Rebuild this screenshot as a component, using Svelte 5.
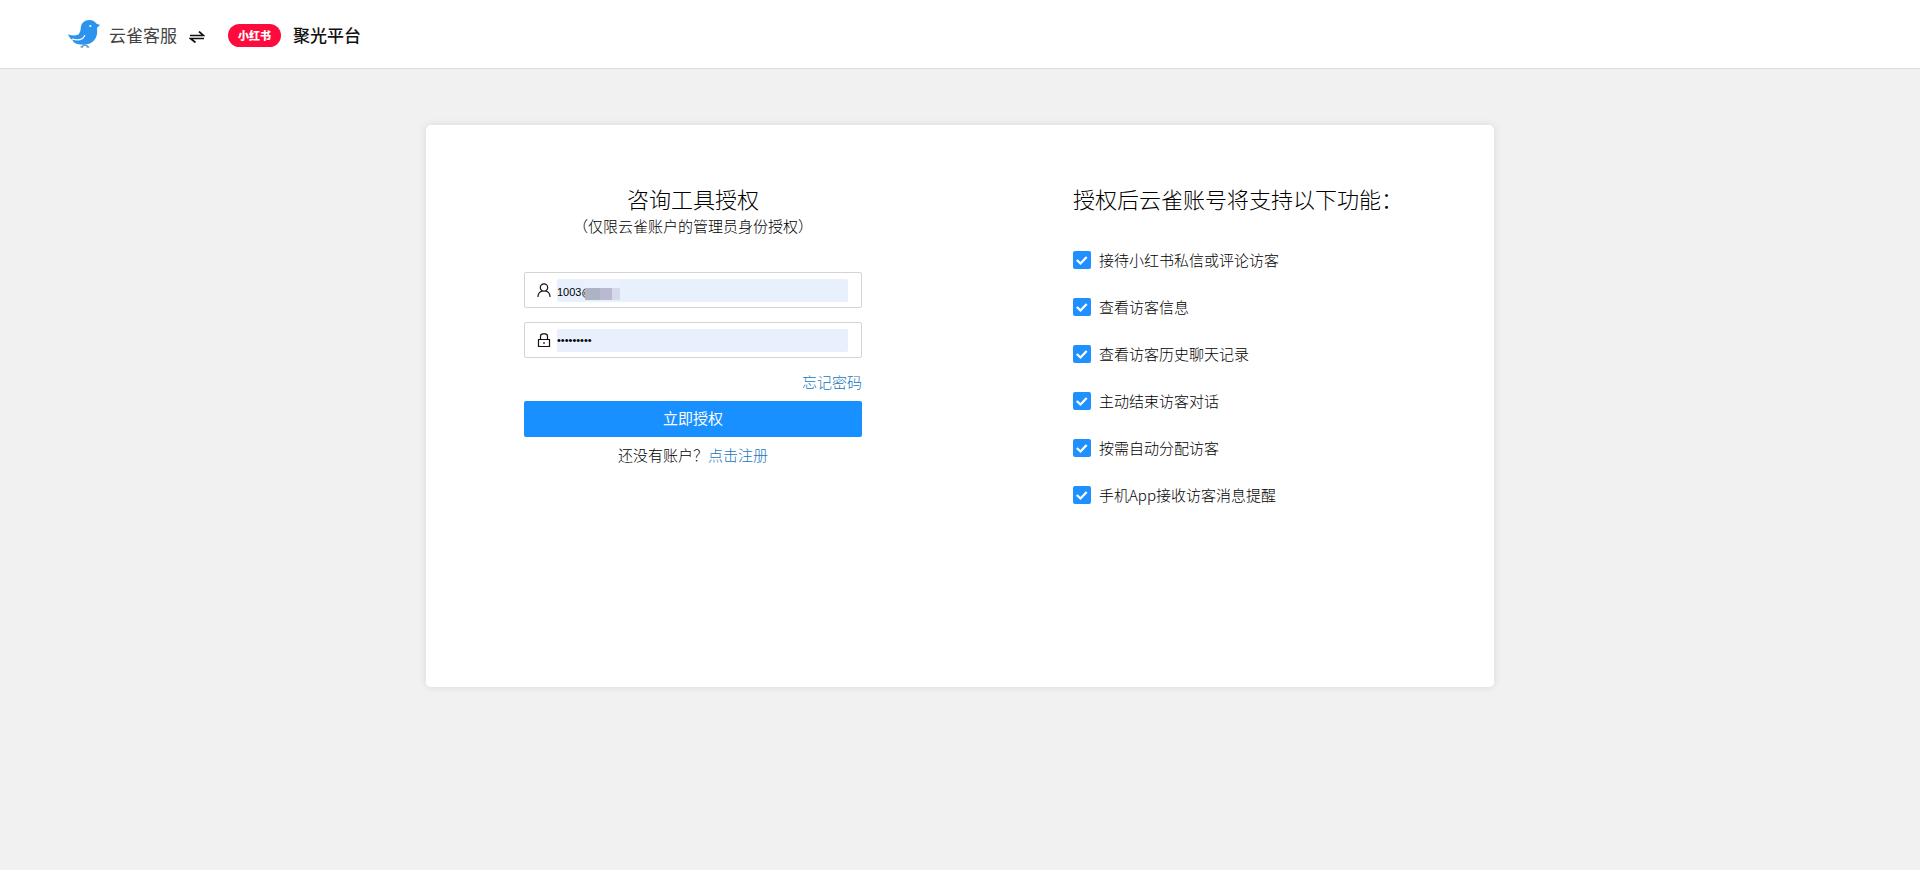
<script>
	let account = $state("1003@");
	let password = $state("123456789");

	let features = $state([
		{ name: "接待小红书私信或评论访客", checked: true },
		{ name: "查看访客信息", checked: true },
		{ name: "查看访客历史聊天记录", checked: true },
		{ name: "主动结束访客对话", checked: true },
		{ name: "按需自动分配访客", checked: true },
		{ name: "手机App接收访客消息提醒", checked: true },
	]);
</script>

<div class="page">
	<header>
		<svg class="bird" viewBox="0 0 32 28" aria-hidden="true">
			<path
				fill="#2b93ee"
				d="M32 5 28.600 3.800C27 1.300 24.500 0 21.500 0c-5 0-8.500 3.500-8.700 7.500-.1 3-.8 5.200-2.300 7C7 16.200 3.500 15.800.2 14.200c.6 2.600 2 4.300 4 5.600l1.600 2.400c3.500 2.300 8 2.800 12.200 2.300 6.500-.8 11-5.500 11.200-12.500 0-1.700-.2-3-.2-4.200.8-.8 2-1.500 3-2.800z"
			/>
			<path
				d="M4.500 19.200c5 1.200 10.500.6 12.200-3.700"
				fill="none"
				stroke="#fff"
				stroke-width="1.200"
				stroke-linecap="round"
			/>
			<circle cx="22.300" cy="6" r="1.100" fill="#fff" />
			<path
				d="M12.500 27.300c1-.8 1.800-.6 2.700-.2M13.500 26.800c1.500-2 5.500-2 7 0M18.500 27.100c1-.4 1.800-.6 2.800.2"
				fill="none"
				stroke="#5b93c4"
				stroke-width="1.200"
			/>
		</svg>
		<span class="brand">云雀客服</span>
		<svg class="swap" viewBox="0 0 16 12" aria-hidden="true">
			<path d="M1 4.500h13.500L10 .5M15 7.500H1.500l5 4" fill="none" stroke="#111" stroke-width="1.700" />
		</svg>
		<span class="pill">小红书</span>
		<span class="platform">聚光平台</span>
	</header>

	<main>
		<section class="login">
			<h1>咨询工具授权</h1>
			<p class="hint">（仅限云雀账户的管理员身份授权）</p>

			<form onsubmit={(e) => e.preventDefault()}>
				<div class="field">
					<label for="account" aria-label="账户">
						<svg viewBox="0 0 14 14">
							<circle cx="7" cy="4.500" r="3.700" />
							<path d="M1 14c0-3.500 2-5.500 4.500-6M13 14c0-3.500-2-5.500-4.500-6" />
						</svg>
					</label>
					<div class="control">
						<input id="account" type="text" bind:value={account} />
						<span class="mask"><i></i><i></i><i></i></span>
					</div>
				</div>
				<div class="field">
					<label for="password" aria-label="密码">
						<svg viewBox="0 0 14 14">
							<path d="M1.500 6.500h11v7h-11zM3.500 6.500V3.500Q3.500.8 6 .8h2q2.500 0 2.500 2.700v3M7 9v2" />
						</svg>
					</label>
					<div class="control">
						<input id="password" type="password" bind:value={password} />
					</div>
				</div>
				<a class="forgot" href="#forgot">忘记密码</a>
				<button type="submit">立即授权</button>
			</form>
			<p class="register">还没有账户？<a href="#register">点击注册</a></p>
		</section>

		<section class="features">
			<h2>授权后云雀账号将支持以下功能：</h2>
			<ul>
				{#each features as item}
					<li>
						<label>
							<input type="checkbox" bind:checked={item.checked} />
							<svg class="tick" viewBox="0 0 18 18" aria-hidden="true">
								<path d="M3.800 9l3.700 3.500 6.200-6.500" />
							</svg>
							<span>{item.name}</span>
						</label>
					</li>
				{/each}
			</ul>
		</section>
	</main>
</div>

<style>
	:global(body) {
		margin: 0;
		background: #f1f1f1;
	}

	.page {
		min-height: 100vh;
		font-family: "Noto Sans CJK SC", sans-serif;
		font-size: 15px;
		font-weight: 300;
		line-height: 22px;
		color: #000;
	}

	header {
		display: flex;
		align-items: center;
		height: 68px;
		padding: 0 68px;
		background: #fff;
		border-bottom: 1px solid #dcdcdc;
	}

	.bird {
		width: 32px;
		height: 28px;
	}

	.brand,
	.platform {
		margin-top: 2px;
		font-size: 17px;
		font-weight: 400;
		line-height: 24px;
		color: #444;
	}

	.brand {
		margin-right: 12px;
		margin-left: 9px;
	}

	.swap {
		width: 16px;
		height: 12px;
		margin: 6px 23px 0 0;
	}

	.pill {
		margin: 2px 12px 0 0;
		padding: 0 10px;
		border-radius: 12px;
		background: #ff0a3c;
		color: #fff;
		font-size: 11px;
		font-weight: 900;
		line-height: 23px;
	}

	.platform {
		color: #111;
		font-weight: 500;
	}

	main {
		display: grid;
		grid-template-columns: 1fr 1fr;
		box-sizing: border-box;
		max-width: 1068px;
		min-height: 562px;
		margin: 56px auto 0;
		padding-top: 58px;
		border-radius: 5px;
		background: #fff;
		box-shadow: 0 0 8px rgba(0, 0, 0, 0.1);
	}

	h1,
	h2 {
		margin: 0;
		font-size: 22px;
		font-weight: 300;
		line-height: 30px;
	}

	p {
		margin: 0;
	}

	a {
		color: #1a76b8;
		text-decoration: none;
	}

	.login {
		display: flex;
		flex-direction: column;
		align-items: center;
	}

	.hint {
		margin-top: 2px;
	}

	form {
		display: flex;
		flex-direction: column;
		width: 338px;
		margin-top: 35px;
	}

	.field {
		display: flex;
		align-items: center;
		box-sizing: border-box;
		height: 36px;
		margin-bottom: 14px;
		padding: 0 13px 0 12px;
		border: 1px solid #d4d4d4;
		border-radius: 2px;
	}

	.field:nth-child(2) {
		margin-bottom: 13px;
	}

	.field label {
		display: flex;
		margin-right: 6px;
	}

	.field svg {
		width: 14px;
		height: 14px;
		fill: none;
		stroke: #111;
		stroke-width: 1.2;
	}

	.control {
		position: relative;
		flex: 1;
		display: flex;
	}

	.control input {
		box-sizing: border-box;
		width: 100%;
		height: 23px;
		padding: 4px 0 0;
		border: 0;
		border-radius: 2px;
		outline: 0;
		background: #e8f0fe;
		color: #000;
		font-family: "Liberation Sans", Arial, sans-serif;
		font-size: 11px;
	}

	#password {
		padding-top: 0;
	}

	/* hides the tail of the account name */
	.mask {
		position: absolute;
		top: 2px;
		left: 28px;
		display: flex;
		padding-top: 7px;
		background: #ebf1fe;
	}

	.mask i {
		width: 15px;
		height: 12px;
		background: #adb3c3;
	}

	.mask i:nth-child(2) {
		width: 12px;
		background: #b9bacf;
	}

	.mask i:nth-child(3) {
		width: 8px;
		background: #d5daeb;
	}

	.forgot {
		align-self: flex-end;
	}

	button {
		height: 36px;
		margin-top: 8px;
		padding: 0 0 2px;
		border: 0;
		border-radius: 2px;
		background: #1890ff;
		color: #fff;
		font: inherit;
		font-weight: 400;
		cursor: pointer;
	}

	.register {
		margin-top: 7px;
	}

	.features {
		padding-left: 113px;
	}

	ul {
		display: grid;
		gap: 25px;
		margin: 36px 0 0;
		padding: 0;
		list-style: none;
	}

	li label {
		display: flex;
		align-items: center;
		gap: 8px;
	}

	li input {
		position: absolute;
		opacity: 0;
	}

	.tick {
		width: 18px;
		height: 18px;
		border-radius: 2px;
		background: #fff;
		fill: none;
		stroke: #fff;
		stroke-width: 2.3;
	}

	li input:checked + .tick {
		background: #1e90ff;
	}
</style>
